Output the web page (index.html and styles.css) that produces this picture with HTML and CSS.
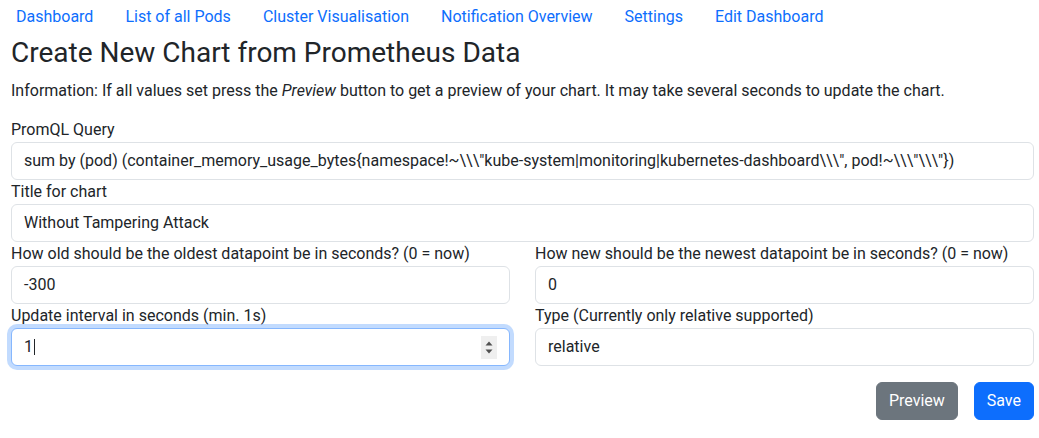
FILE: index.html
```html
<!DOCTYPE html>
<html lang="en">
<head>
<meta charset="utf-8">
<title>Create New Chart</title>
<link rel="stylesheet" href="styles.css">
</head>
<body>
<ul class="nav">
  <li><a class="nav-link" href="#">Dashboard</a></li>
  <li><a class="nav-link" href="#">List of all Pods</a></li>
  <li><a class="nav-link" href="#">Cluster Visualisation</a></li>
  <li><a class="nav-link" href="#">Notification Overview</a></li>
  <li><a class="nav-link" href="#">Settings</a></li>
  <li><a class="nav-link" href="#">Edit Dashboard</a></li>
</ul>
<main class="container">
  <h2 class="title">Create New Chart from Prometheus Data</h2>
  <p class="info">Information: If all values set press the <em>Preview</em> button to get a preview of your chart. It may take several seconds to update the chart.</p>
  <div class="field">
    <label class="form-label">PromQL Query</label>
    <div class="form-control">sum by (pod) (container_memory_usage_bytes{namespace!~\\\"kube-system|monitoring|kubernetes-dashboard\\\", pod!~\\\"\\\"})</div>
  </div>
  <div class="field">
    <label class="form-label">Title for chart</label>
    <div class="form-control">Without Tampering Attack</div>
  </div>
  <div class="row">
    <div class="field">
      <label class="form-label">How old should be the oldest datapoint be in seconds? (0 = now)</label>
      <div class="form-control">-300</div>
    </div>
    <div class="field">
      <label class="form-label">How new should be the newest datapoint be in seconds? (0 = now)</label>
      <div class="form-control">0</div>
    </div>
    <div class="field">
      <label class="form-label">Update interval in seconds (min. 1s)</label>
      <div class="form-control focused">
        <span class="value">1</span><span class="caret"></span>
        <span class="spinner">
          <svg width="16" height="23" viewBox="0 0 16 23"><path d="M4.5 9.5 L8 5.5 L11.5 9.5 Z" fill="#505050"/><path d="M4.5 13.5 L8 17.5 L11.5 13.5 Z" fill="#505050"/></svg>
        </span>
      </div>
    </div>
    <div class="field">
      <label class="form-label">Type (Currently only relative supported)</label>
      <div class="form-control">relative</div>
    </div>
  </div>
  <div class="actions">
    <button class="btn btn-secondary" type="button">Preview</button>
    <button class="btn btn-primary" type="button">Save</button>
  </div>
</main>
</body>
</html>
```
FILE: styles.css
```css
* { box-sizing: border-box; }
body {
  margin: 0;
  font-family: Roboto, "Liberation Sans", sans-serif;
  font-size: 16px;
  line-height: 24px;
  color: #212529;
  background: #fff;
}
.nav {
  display: flex;
  list-style: none;
  margin: 0;
  padding: 0;
}
.nav-link {
  display: block;
  padding: 5px 16px 6px;
  color: #0d6efd;
  text-decoration: none;
}
.container {
  padding: 0 5px 0 11px;
}
.title {
  margin: 0 0 8px;
  font-size: 28px;
  line-height: 36px;
  font-weight: 400;
}
.info {
  margin: 0 0 15px;
}
.form-label {
  display: block;
  height: 24px;
}
.form-control {
  position: relative;
  display: flex;
  align-items: center;
  height: 38px;
  padding: 6px 12px;
  border: 1px solid #dee2e6;
  border-radius: 6px;
  background: #fff;
  white-space: nowrap;
  overflow: hidden;
}
.focused {
  border-color: #86b7fe;
  box-shadow: 0 0 0 4px rgba(13, 110, 253, .25);
  overflow: visible;
}
.caret {
  display: inline-block;
  width: 1px;
  height: 16px;
  margin-left: 1px;
  background: #212529;
}
.spinner {
  margin-left: auto;
  display: flex;
  background: #efefef;
  width: 16px;
  height: 23px;
}
.row {
  display: grid;
  grid-template-columns: 1fr 1fr;
  column-gap: 25px;
}
.actions {
  display: flex;
  justify-content: flex-end;
  gap: 16px;
  margin-top: 16px;
}
.btn {
  font-family: inherit;
  font-size: 16px;
  line-height: 24px;
  padding: 6px 12px;
  border: 1px solid transparent;
  border-radius: 6px;
  color: #fff;
  cursor: pointer;
}
.btn-secondary { background: #6c757d; border-color: #6c757d; }
.btn-primary { background: #0d6efd; border-color: #0d6efd; }
```
